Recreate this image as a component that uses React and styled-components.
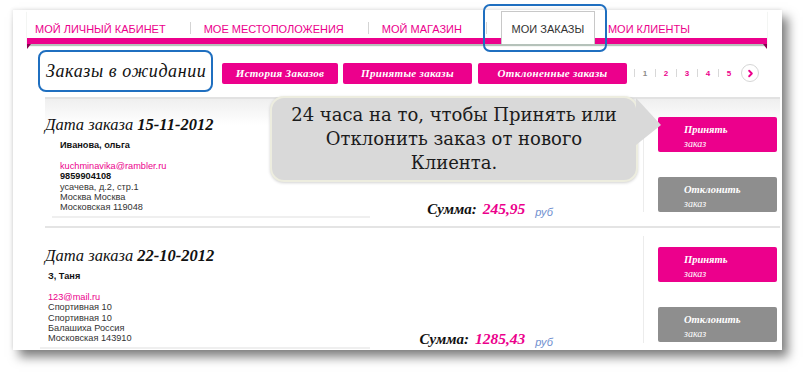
import React from 'react';
import styled, { createGlobalStyle } from 'styled-components';
import { ChevronRight } from 'lucide-react';

const PINK = '#ec008c';
const BLUE = '#1f6fc0';

const GlobalStyle = createGlobalStyle`
  body {
    margin: 0;
    background: #fff;
    font-family: "Liberation Sans", Arial, sans-serif;
  }
`;

const Page = styled.div`
  height: 376px;
  padding: 10px 0 0 13px;
  box-sizing: border-box;
`;

const Panel = styled.div`
  position: relative;
  width: 769px;
  height: 340px;
  background: #fff;
  box-shadow: -1px -1px 3px rgba(0, 0, 0, 0.08), 6px 7px 10px rgba(0, 0, 0, 0.5);
`;

const Nav = styled.nav`
  position: relative;
  display: flex;
  align-items: flex-end;
  height: 28px;
  margin: 0 15px 0 14px;
  padding-left: 8px;
  border-bottom: 6px solid ${PINK};
  box-shadow: 0 2px 1px #b5c2ba;

  &::before,
  &::after {
    content: '';
    position: absolute;
    bottom: -11px;
    border-bottom: 5px solid transparent;
  }
  &::before {
    left: 0;
    border-left: 4px solid #8a0050;
  }
  &::after {
    right: 0;
    border-right: 4px solid #8a0050;
  }
`;

const NavItem = styled.a`
  padding: 0 ${({ $last }) => ($last ? 0 : 24)}px 2px ${({ $first }) => ($first ? 0 : 13)}px;
  font-size: 11px;
  line-height: 14px;
  color: ${PINK};
  text-transform: uppercase;
  white-space: nowrap;
`;

const NavSep = styled.span`
  width: 1px;
  height: 12px;
  margin-bottom: 4px;
  background: #d4d4d4;
`;

const Tab = styled.a`
  position: relative;
  z-index: 1;
  display: flex;
  align-items: flex-end;
  justify-content: center;
  width: 94px;
  height: 33px;
  margin: 0 0 -6px 14px;
  padding-bottom: 8px;
  box-sizing: border-box;
  background: #fff;
  border: 1px solid #c8c8c8;
  border-bottom: none;
  font-size: 11px;
  line-height: 14px;
  color: #333;
  white-space: nowrap;

  &::after {
    content: '';
    position: absolute;
    top: -8px;
    left: -19px;
    right: -13px;
    bottom: -8px;
    border: 2px solid ${BLUE};
    border-radius: 7px;
  }
`;

const Toolbar = styled.div`
  display: flex;
  align-items: center;
  height: 42px;
  margin: 6px 0 0 25px;
`;

const Title = styled.h1`
  display: flex;
  align-items: center;
  width: 175px;
  height: 42px;
  margin: 0;
  padding-left: 6px;
  box-sizing: border-box;
  border: 2px solid ${BLUE};
  border-radius: 8px;
  font-family: "Liberation Serif", serif;
  font-style: italic;
  font-weight: normal;
  font-size: 18px;
  letter-spacing: 0.6px;
  white-space: nowrap;
  color: #111;
`;

const FilterButton = styled.button`
  width: ${({ $w }) => $w}px;
  height: 21px;
  margin: 4px 0 0 ${({ $gap }) => $gap}px;
  padding: 0;
  border: none;
  border-radius: 2px;
  background: ${PINK};
  color: #fff;
  font-family: "Liberation Serif", serif;
  font-style: italic;
  font-weight: bold;
  font-size: 11px;
  letter-spacing: 0.3px;
`;

const Pager = styled.div`
  display: flex;
  align-items: center;
  margin: 4px 0 0 7px;
`;

const PageSep = styled.span`
  width: 1px;
  height: 8px;
  background: #d8d8d8;
`;

const PageNum = styled.span`
  width: 20px;
  text-align: center;
  font-size: 8px;
  font-weight: bold;
  color: ${({ $active }) => ($active ? '#8a8a8a' : PINK)};
`;

const NextButton = styled.span`
  display: flex;
  align-items: center;
  justify-content: center;
  width: 16px;
  height: 16px;
  margin-left: 2px;
  border: 1px solid #d6d6d6;
  border-radius: 50%;
  color: ${PINK};
`;

const List = styled.div`
  margin: 5px 2px 0 32px;
  border-top: 2px solid #e2e2e2;
  background: linear-gradient(to bottom, #efefef, #fff 26px);
`;

const Order = styled.div`
  display: grid;
  grid-template-columns: 325px 183px 90px 134px;
  height: ${({ $h }) => $h}px;
  padding-right: 3px;
  border-bottom: ${({ $sep }) => ($sep ? '2px solid #e4e4e4' : 'none')};
`;

const Info = styled.div`
  padding-top: ${({ $top }) => $top}px;
`;

const OrderDate = styled.div`
  font-family: "Liberation Serif", serif;
  font-style: italic;
  font-size: 16.5px;
  line-height: 20px;
  color: #111;

  b {
    font-weight: bold;
  }
`;

const Details = styled.div`
  margin: 5px 0 0 ${({ $indent }) => $indent - 8}px;
  padding: 0 0 3px 8px;
  border-bottom: 2px solid #efefef;
  font-size: 9.2px;
  line-height: 10.4px;
  color: #333;
`;

const Name = styled.div`
  font-weight: bold;
  color: #111;
  margin-bottom: 10.4px;
`;

const Email = styled.div`
  color: ${PINK};
`;

const Phone = styled.div`
  font-weight: bold;
  color: #111;
`;

const SumCol = styled.div`
  display: flex;
  align-items: flex-end;
  justify-content: flex-end;
  padding-bottom: ${({ $bottom }) => $bottom}px;
  white-space: nowrap;
`;

const SumLabel = styled.span`
  font-family: "Liberation Serif", serif;
  font-style: italic;
  font-weight: bold;
  font-size: 15px;
  color: #111;
`;

const SumValue = styled.span`
  margin-left: 6px;
  font-family: "Liberation Serif", serif;
  font-style: italic;
  font-weight: bold;
  font-size: 15.5px;
  color: ${PINK};
`;

const Currency = styled.span`
  margin-left: 10px;
  font-style: italic;
  font-size: 11px;
  color: #6f8fcf;
`;

const Actions = styled.div`
  grid-column: 4;
  display: flex;
  flex-direction: column;
  gap: 25px;
  margin: ${({ $m }) => $m};
  padding: ${({ $pt }) => $pt}px 0 0 14px;
  border-left: 1px solid #ececec;
`;

const ActionButton = styled.button`
  width: 119px;
  height: 35px;
  padding: 4px 0 0 26px;
  box-sizing: border-box;
  border: none;
  border-radius: 2px;
  background: ${({ $accept }) => ($accept ? PINK : '#8e8e8e')};
  color: #fff;
  text-align: left;
  font-family: "Liberation Serif", serif;
  font-style: italic;
  font-weight: bold;
  font-size: 10.5px;
  line-height: 14px;

  span {
    display: block;
    font-weight: normal;
    font-size: 10px;
  }
`;

const Bubble = styled.div`
  position: absolute;
  left: 257px;
  top: 86px;
  width: 368px;
  height: 86px;
  box-sizing: border-box;
  display: flex;
  align-items: center;
  justify-content: center;
  background: #d9d9d9;
  border: 2px solid #ededdf;
  border-radius: 14px;
  box-shadow: 0 1px 3px rgba(0, 0, 0, 0.18);
  font-family: "DejaVu Serif", serif;
  font-size: 18px;
  line-height: 24px;
  text-align: center;
  color: #1c1c1c;

  &::after {
    content: '';
    position: absolute;
    top: 0;
    right: -25px;
    border-top: 27px solid transparent;
    border-bottom: 20px solid transparent;
    border-left: 25px solid #d9d9d9;
  }
`;

const orders = [
  {
    date: '15-11-2012',
    name: 'Иванова, ольга',
    email: 'kuchminavika@rambler.ru',
    phone: '9859904108',
    lines: ['усачева, д.2, стр.1', 'Москва Москва', 'Московская 119048'],
    sum: '245,95',
    indent: 15,
    top: 16,
    height: 127,
    sumBottom: 9,
    actions: '8px 0 15px',
    pt: 10,
  },
  {
    date: '22-10-2012',
    name: 'З, Таня',
    email: '123@mail.ru',
    lines: ['Спортивная 10', 'Спортивная 10', 'Балашиха Россия', 'Московская 143910'],
    sum: '1285,43',
    indent: 3,
    top: 18,
    height: 118,
    sumBottom: 1,
    actions: '8px 0 6px',
    pt: 11,
  },
];

const App = () => {
  return (
    <Page>
      <GlobalStyle />
      <Panel>
        <Nav>
          <NavItem $first>Мой личный кабинет</NavItem>
          <NavSep />
          <NavItem>Мое местоположения</NavItem>
          <NavSep />
          <NavItem>Мой магазин</NavItem>
          <NavSep />
          <Tab>МОИ ЗАКАЗЫ</Tab>
          <NavItem $last>Мои клиенты</NavItem>
        </Nav>

        <Toolbar>
          <Title>Заказы в ожидании</Title>
          <FilterButton $w={116} $gap={9}>История Заказов</FilterButton>
          <FilterButton $w={129} $gap={5}>Принятые заказы</FilterButton>
          <FilterButton $w={149} $gap={6}>Отклоненные заказы</FilterButton>
          <Pager>
            {[1, 2, 3, 4, 5].map((n) => (
              <React.Fragment key={n}>
                <PageSep />
                <PageNum $active={n === 1}>{n}</PageNum>
              </React.Fragment>
            ))}
            <NextButton>
              <ChevronRight size={11} strokeWidth={4} />
            </NextButton>
          </Pager>
        </Toolbar>

        <List>
          {orders.map((o, i) => (
            <Order key={o.date} $h={o.height} $sep={i === 0}>
              <Info $top={o.top}>
                <OrderDate>
                  Дата заказа <b>{o.date}</b>
                </OrderDate>
                <Details $indent={o.indent}>
                  <Name>{o.name}</Name>
                  <Email>{o.email}</Email>
                  {o.phone && <Phone>{o.phone}</Phone>}
                  {o.lines.map((l, j) => (
                    <div key={j}>{l}</div>
                  ))}
                </Details>
              </Info>
              <SumCol $bottom={o.sumBottom}>
                <SumLabel>Сумма:</SumLabel>
                <SumValue>{o.sum}</SumValue>
                <Currency>руб</Currency>
              </SumCol>
              <Actions $m={o.actions} $pt={o.pt}>
                <ActionButton $accept>
                  Принять<span>заказ</span>
                </ActionButton>
                <ActionButton>
                  Отклонить<span>заказ</span>
                </ActionButton>
              </Actions>
            </Order>
          ))}
        </List>

        <Bubble>
          24 часа на то, чтобы Принять или
          <br />
          Отклонить заказ от нового
          <br />
          Клиента.
        </Bubble>
      </Panel>
    </Page>
  );
};

export default App;
